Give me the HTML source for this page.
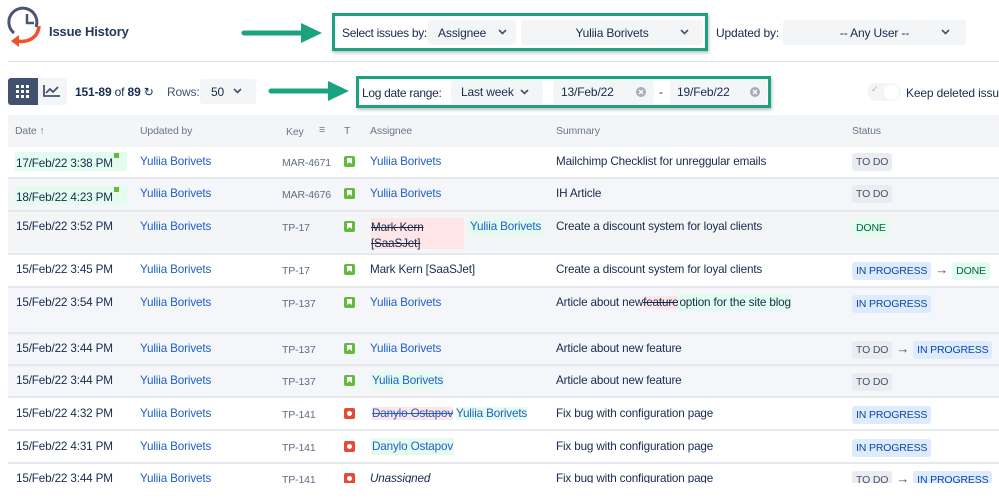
<!DOCTYPE html>
<html><head><meta charset="utf-8"><style>
*{box-sizing:border-box;margin:0;padding:0}
body{width:999px;height:497px;background:#fff;font-family:"Liberation Sans",sans-serif;font-size:11.7px;letter-spacing:-0.15px;color:#172b4d;position:relative;overflow:hidden}
.a{position:absolute;white-space:nowrap}
.sel{position:absolute;background:#f4f5f7;border-radius:3px;color:#172b4d;font-size:12px;display:flex;align-items:center}
.chev{position:absolute;top:9px;width:9px;height:6px}
.gbox{position:absolute;border:3px solid #1ba37f;box-shadow:1px 2px 3px rgba(0,0,0,.25)}
.row{position:absolute;left:8px;width:991px;border-bottom:2px solid #e6e8ec}
.lnk{color:#1f5fc9}
.key{color:#5e6c84;font-size:10.5px}
.st{display:inline-block;font-size:10.5px;padding:3px 4px;border-radius:3px}
.todo{background:#ebecf0;color:#42526e}
.ip{background:#deebff;color:#0747a6}
.dn{background:#e3fcef;color:#006644}
.ic{position:absolute;width:11px;height:11px;border-radius:2px}
.story{background:#63ba3c}
.story:after{content:"";position:absolute;left:3px;top:2px;width:5px;height:6px;background:#fff;clip-path:polygon(0 0,100% 0,100% 100%,50% 70%,0 100%)}
.bug{background:#e5493a}
.bug:after{content:"";position:absolute;left:3px;top:3px;width:5px;height:5px;border-radius:50%;background:#fff}
.gr{background:#e3fcef}
.rd{background:#ffe5e5}
.arr{color:#42526e;font-size:13px;margin:0 4px;font-weight:bold}
.clr{position:absolute;right:8px;top:7px;width:10px;height:10px}
</style></head><body>
<svg width="0" height="0" style="position:absolute"><defs>
<symbol id="cv" viewBox="0 0 9 6"><path d="M1 1L4.5 4.5L8 1" fill="none" stroke="#42526e" stroke-width="1.6"/></symbol>
<symbol id="cx" viewBox="0 0 10 10"><circle cx="5" cy="5" r="5" fill="#a5adba"/><path d="M3 3L7 7M7 3L3 7" stroke="#fff" stroke-width="1.3"/></symbol>
</defs></svg>
<svg class="a" style="left:6px;top:5px" width="36" height="44" viewBox="0 0 36 44">
<path d="M8 28 A14 14 0 1 1 30 22" fill="none" stroke="#4a5573" stroke-width="3"/>
<path d="M21 9 V18 H28" fill="none" stroke="#4a5573" stroke-width="2.5"/>
<path d="M33 21 C32 33 22 38 10 36" fill="none" stroke="#f0522a" stroke-width="3.5"/>
<path d="M5 36 L13 30 L13 42 Z" fill="#f0522a"/>
</svg>
<div class="a" style="left:49px;top:24px;font-weight:bold;font-size:13px;color:#253858">Issue History</div>
<svg class="a" style="left:241px;top:22px" width="82" height="22"><line x1="3" y1="11" x2="62" y2="11" stroke="#1ba37f" stroke-width="5" stroke-linecap="round"/><path d="M60 1 L81 11 L60 21Z" fill="#1ba37f"/></svg>
<svg class="a" style="left:268px;top:80px" width="82" height="22"><line x1="3" y1="11" x2="62" y2="11" stroke="#1ba37f" stroke-width="5" stroke-linecap="round"/><path d="M60 1 L81 11 L60 21Z" fill="#1ba37f"/></svg>
<div class="gbox" style="left:332px;top:13px;width:376px;height:38px"></div>
<div class="a" style="left:342px;top:26px;font-size:12px;letter-spacing:-0.3px">Select issues by:</div>
<div class="sel" style="left:428px;top:20px;width:88px;height:25px;padding-left:10px">Assignee<svg class="chev" style="right:9px"><use href="#cv"/></svg></div>
<div class="sel" style="left:521px;top:20px;width:182px;height:25px;justify-content:center">Yuliia Borivets<svg class="chev" style="right:14px"><use href="#cv"/></svg></div>
<div class="a" style="left:716px;top:26px;font-size:12px">Updated by:</div>
<div class="sel" style="left:783px;top:20px;width:183px;height:25px;justify-content:center">-- Any User --<svg class="chev" style="right:16px"><use href="#cv"/></svg></div>
<div class="a" style="left:8px;top:61px;width:991px;height:1px;background:#dfe1e6"></div>
<div class="a" style="left:8px;top:78px;width:30px;height:27px;background:#42526e;border-radius:3px 0 0 3px"></div>
<svg class="a" style="left:16px;top:85px" width="14" height="14"><g fill="#fff"><rect x="0" y="0" width="3" height="3"/><rect x="5" y="0" width="3" height="3"/><rect x="10" y="0" width="3" height="3"/><rect x="0" y="5" width="3" height="3"/><rect x="5" y="5" width="3" height="3"/><rect x="10" y="5" width="3" height="3"/><rect x="0" y="10" width="3" height="3"/><rect x="5" y="10" width="3" height="3"/><rect x="10" y="10" width="3" height="3"/></g></svg>
<div class="a" style="left:38px;top:78px;width:29px;height:27px;background:#f4f5f7;border-radius:0 3px 3px 0"></div>
<svg class="a" style="left:43px;top:84px" width="18" height="14"><path d="M1 1V12H17M3 9L7 5L10 8L15 3" fill="none" stroke="#42526e" stroke-width="1.8"/></svg>
<div class="a" style="left:75px;top:85px;font-size:12px"><b>151-89</b> of <b>89</b> &#8635;</div>
<div class="a" style="left:167px;top:85px;font-size:12px;color:#42526e">Rows:</div>
<div class="sel" style="left:200px;top:79px;width:56px;height:25px;padding-left:11px">50<svg class="chev" style="right:14px"><use href="#cv"/></svg></div>
<div class="gbox" style="left:356px;top:76px;width:415px;height:32px"></div>
<div class="a" style="left:362px;top:86px;font-size:12px;letter-spacing:-0.3px">Log date range:</div>
<div class="sel" style="left:451px;top:80px;width:92px;height:24px;padding-left:10px">Last week<svg class="chev" style="right:14px"><use href="#cv"/></svg></div>
<div class="sel" style="left:553px;top:80px;width:101px;height:24px;padding-left:8px">13/Feb/22<svg class="clr"><use href="#cx"/></svg></div>
<div class="a" style="left:659px;top:86px">-</div>
<div class="sel" style="left:670px;top:80px;width:97px;height:24px;padding-left:7px">19/Feb/22<svg class="clr" style="right:7px"><use href="#cx"/></svg></div>
<div class="a" style="left:867px;top:83px;width:34px;height:18px;border-radius:9px;background:#f4f5f7"></div>
<div class="a" style="left:884px;top:85px;width:15px;height:15px;border-radius:50%;background:#fff"></div>
<div class="a" style="left:871px;top:84px;font-size:9px;color:#a5adba">&#10003;</div>
<div class="a" style="left:906px;top:86px;font-size:12px">Keep deleted issues</div>
<div class="a" style="left:8px;top:115px;width:991px;height:32px;background:#f4f5f7"></div>
<div class="a" style="left:15px;top:125px;font-size:10.5px;color:#6b778c">Date &#8593;</div>
<div class="a" style="left:140px;top:125px;font-size:10.5px;color:#6b778c">Updated by</div>
<div class="a" style="left:286px;top:126px;font-size:10.5px;color:#6b778c">Key</div>
<div class="a" style="left:319px;top:124px;font-size:10.5px;color:#6b778c">&#8801;</div>
<div class="a" style="left:344px;top:125px;font-size:10.5px;color:#6b778c">T</div>
<div class="a" style="left:370px;top:125px;font-size:10.5px;color:#6b778c">Assignee</div>
<div class="a" style="left:556px;top:125px;font-size:10.5px;color:#6b778c">Summary</div>
<div class="a" style="left:852px;top:125px;font-size:10.5px;color:#6b778c">Status</div>

<div class="row" style="top:147px;height:32px;background:#fff"></div>
<div class="row" style="top:179px;height:33px;background:#f4f6fa"></div>
<div class="row" style="top:212px;height:43px;background:#f4f5f7"></div>
<div class="row" style="top:255px;height:33px;background:#fff"></div>
<div class="row" style="top:288px;height:46px;background:#f4f6fa"></div>
<div class="row" style="top:334px;height:32px;background:#f4f6fa"></div>
<div class="row" style="top:366px;height:32px;background:#f4f6fa"></div>
<div class="row" style="top:398px;height:33px;background:#fff"></div>
<div class="row" style="top:431px;height:33px;background:#fff"></div>
<div class="row" style="top:464px;height:40px;background:#fff;border:0"></div>

<div class="a gr" style="left:15px;top:152px;width:112px;height:19px"></div>
<div class="a" style="left:16px;top:157px">17/Feb/22 3:38 PM</div>
<div class="a" style="left:114px;top:153px;width:5px;height:5px;background:#63ba3c"></div>
<div class="a lnk" style="left:140px;top:155px">Yuliia Borivets</div>
<div class="a key" style="left:282px;top:157px">MAR-4671</div><div class="ic story" style="left:344px;top:156px"></div>
<div class="a lnk" style="left:370px;top:155px">Yuliia Borivets</div>
<div class="a" style="left:556px;top:155px">Mailchimp Checklist for unreggular emails</div>
<div class="a" style="left:852px;top:153px"><span class="st todo">TO DO</span></div>

<div class="a gr" style="left:15px;top:186px;width:112px;height:19px"></div>
<div class="a" style="left:16px;top:191px">18/Feb/22 4:23 PM</div>
<div class="a" style="left:114px;top:187px;width:5px;height:5px;background:#63ba3c"></div>
<div class="a lnk" style="left:140px;top:187px">Yuliia Borivets</div>
<div class="a key" style="left:282px;top:189px">MAR-4676</div><div class="ic story" style="left:344px;top:188px"></div>
<div class="a lnk" style="left:370px;top:187px">Yuliia Borivets</div>
<div class="a" style="left:556px;top:187px">IH Article</div>
<div class="a" style="left:852px;top:185px"><span class="st todo">TO DO</span></div>

<div class="a" style="left:16px;top:220px">15/Feb/22 3:52 PM</div>
<div class="a lnk" style="left:140px;top:220px">Yuliia Borivets</div>
<div class="a key" style="left:282px;top:222px">TP-17</div><div class="ic story" style="left:344px;top:221px"></div>
<div class="a rd" style="left:371px;top:218px;width:93px;height:31px"></div>
<div class="a" style="left:371px;top:220px;text-decoration:line-through;line-height:16px">Mark Kern<br>[SaaSJet]</div>
<div class="a gr lnk" style="left:469px;top:218px;height:18px;padding:2px 1px">Yuliia Borivets</div>
<div class="a" style="left:556px;top:220px">Create a discount system for loyal clients</div>
<div class="a" style="left:852px;top:219px"><span class="st dn">DONE</span></div>

<div class="a" style="left:16px;top:263px">15/Feb/22 3:45 PM</div>
<div class="a lnk" style="left:140px;top:263px">Yuliia Borivets</div>
<div class="a key" style="left:282px;top:265px">TP-17</div><div class="ic story" style="left:344px;top:264px"></div>
<div class="a" style="left:370px;top:263px">Mark Kern [SaaSJet]</div>
<div class="a" style="left:556px;top:263px">Create a discount system for loyal clients</div>
<div class="a" style="left:852px;top:262px"><span class="st ip">IN PROGRESS</span><span class="arr">&#8594;</span><span class="st dn">DONE</span></div>

<div class="a" style="left:16px;top:296px">15/Feb/22 3:54 PM</div>
<div class="a lnk" style="left:140px;top:296px">Yuliia Borivets</div>
<div class="a key" style="left:282px;top:298px">TP-137</div><div class="ic story" style="left:344px;top:297px"></div>
<div class="a lnk" style="left:370px;top:296px">Yuliia Borivets</div>
<div class="a" style="left:556px;top:294px;padding-top:2px">Article about new<span class="rd" style="text-decoration:line-through">feature</span><span class="gr" style="padding:2px 1px">option for the site blog</span></div>
<div class="a" style="left:852px;top:295px"><span class="st ip">IN PROGRESS</span></div>

<div class="a" style="left:16px;top:342px">15/Feb/22 3:44 PM</div>
<div class="a lnk" style="left:140px;top:342px">Yuliia Borivets</div>
<div class="a key" style="left:282px;top:344px">TP-137</div><div class="ic story" style="left:344px;top:343px"></div>
<div class="a lnk" style="left:370px;top:342px">Yuliia Borivets</div>
<div class="a" style="left:556px;top:342px">Article about new feature</div>
<div class="a" style="left:852px;top:341px"><span class="st todo">TO DO</span><span class="arr">&#8594;</span><span class="st ip">IN PROGRESS</span></div>

<div class="a" style="left:16px;top:374px">15/Feb/22 3:44 PM</div>
<div class="a lnk" style="left:140px;top:374px">Yuliia Borivets</div>
<div class="a key" style="left:282px;top:376px">TP-137</div><div class="ic story" style="left:344px;top:375px"></div>
<div class="a lnk gr" style="left:371px;top:372px;padding:2px 1px">Yuliia Borivets</div>
<div class="a" style="left:556px;top:374px">Article about new feature</div>
<div class="a" style="left:852px;top:373px"><span class="st todo">TO DO</span></div>

<div class="a" style="left:16px;top:407px">15/Feb/22 4:32 PM</div>
<div class="a lnk" style="left:140px;top:407px">Yuliia Borivets</div>
<div class="a key" style="left:282px;top:409px">TP-141</div><div class="ic bug" style="left:344px;top:408px"></div>
<div class="a lnk" style="left:371px;top:405px;padding:2px 1px"><span class="rd" style="text-decoration:line-through">Danylo Ostapov</span> <span class="gr">Yuliia Borivets</span></div>
<div class="a" style="left:556px;top:407px">Fix bug with configuration page</div>
<div class="a" style="left:852px;top:406px"><span class="st ip">IN PROGRESS</span></div>

<div class="a" style="left:16px;top:440px">15/Feb/22 4:31 PM</div>
<div class="a lnk" style="left:140px;top:440px">Yuliia Borivets</div>
<div class="a key" style="left:282px;top:442px">TP-141</div><div class="ic bug" style="left:344px;top:441px"></div>
<div class="a lnk gr" style="left:371px;top:438px;padding:2px 1px">Danylo Ostapov</div>
<div class="a" style="left:556px;top:440px">Fix bug with configuration page</div>
<div class="a" style="left:852px;top:439px"><span class="st ip">IN PROGRESS</span></div>

<div class="a" style="left:16px;top:472px">15/Feb/22 3:44 PM</div>
<div class="a lnk" style="left:140px;top:472px">Yuliia Borivets</div>
<div class="a key" style="left:282px;top:474px">TP-141</div><div class="ic bug" style="left:344px;top:473px"></div>
<div class="a" style="left:370px;top:472px;font-style:italic">Unassigned</div>
<div class="a" style="left:556px;top:472px">Fix bug with configuration page</div>
<div class="a" style="left:852px;top:471px"><span class="st todo">TO DO</span><span class="arr">&#8594;</span><span class="st ip">IN PROGRESS</span></div>
<div class="a" style="left:0;top:483px;width:999px;height:14px;background:#fff"></div>
</body></html>
